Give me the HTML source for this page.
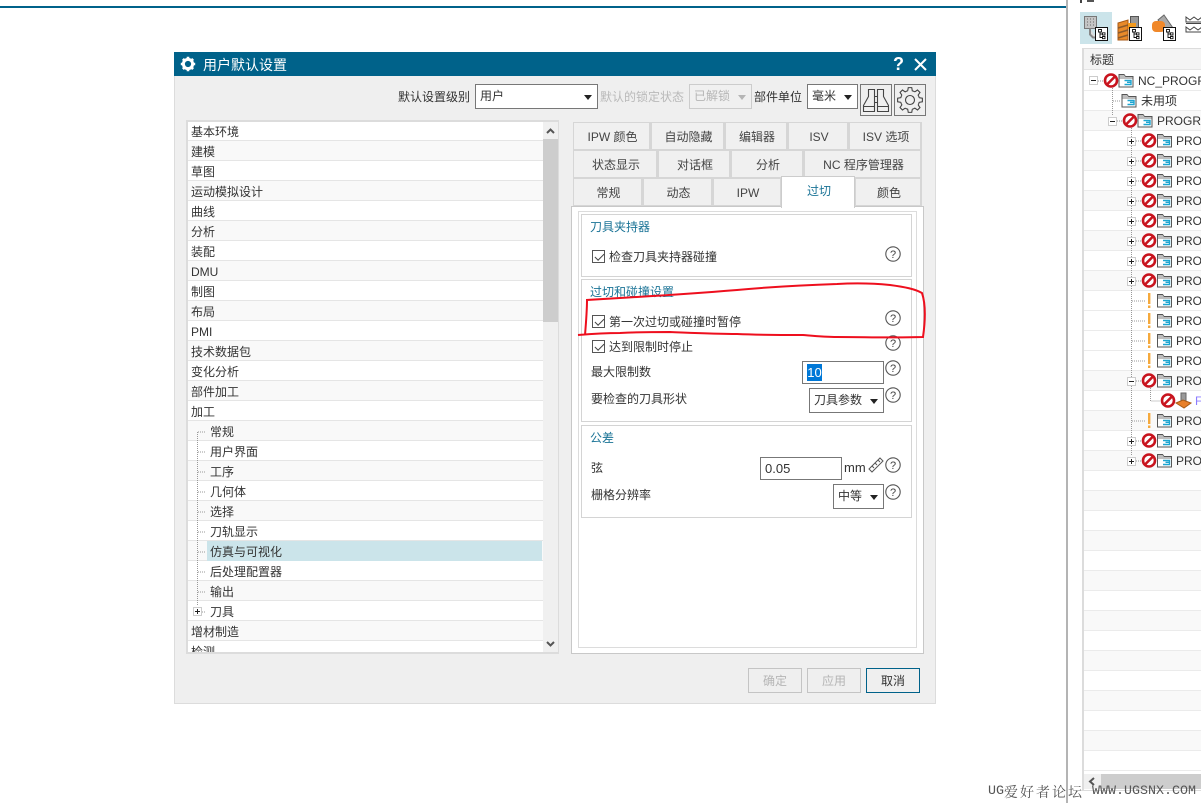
<!DOCTYPE html>
<html lang="zh"><head><meta charset="utf-8"><title>用户默认设置</title>
<style>
html,body{margin:0;padding:0;background:#fff}
body{width:1201px;height:803px;position:relative;overflow:hidden;font:12px/20px "Liberation Sans","Noto Sans CJK SC",sans-serif;color:#333}
div,span{position:absolute;box-sizing:border-box;white-space:nowrap}
.row{left:188px;width:355px;height:20px;border-bottom:1px solid #e5e5e5;line-height:22px;padding-left:3px}
.g{background:#f9f9f9}
.c{padding-left:22px}
.tab{height:28px;background:#f0f0f0;border:1px solid #d6d6d6;border-width:1px 2px 1px 1px;text-align:center;line-height:28px;color:#444;padding-left:2px}
.grp{left:581px;width:331px;border:1px solid #d4d4d4;background:#fff}
.cap{color:#1a7396;left:590px}
.t{color:#333}
.sel,.inp{background:#fff;border:1px solid #777;line-height:22px;padding-left:4px}
.sel:after{content:"";position:absolute;right:5px;top:10px;border:4px solid transparent;border-top:5px solid #222;border-bottom:0}
.dis:after{border-top-color:#b5b5b5}
.btn{top:668px;width:54px;height:25px;border:1px solid #c4c4c4;text-align:center;line-height:24px;color:#b5b5b5}
.cb{left:592px;width:13px;height:13px;border:1px solid #555;background:#fff}
.cb:after{content:"";position:absolute;left:2px;top:1px;width:8px;height:4px;border:solid #444;border-width:0 0 1.5px 1.5px;transform:rotate(-45deg) translate(-1px,1px)}
</style></head><body>

<div style="left:0;top:6px;width:1066px;height:2px;background:#00628a"></div>
<div style="left:1066px;top:0;width:2px;height:803px;background:#b4b4b4"></div>

<!-- dialog -->
<div style="left:174px;top:52px;width:762px;height:652px;background:#efefef;border:1px solid #dcdcdc"></div>
<div style="left:174px;top:52px;width:762px;height:24px;background:#00628a"></div>
<svg style="position:absolute;left:180px;top:56px" width="16" height="16" viewBox="0 0 16 16"><circle cx="8" cy="8" r="4.6" fill="none" stroke="#fff" stroke-width="3"/><g stroke="#fff" stroke-width="2.6"><path d="M8 .8v3M8 12.2v3M.8 8h3M12.2 8h3M2.9 2.9l2 2M11.1 11.1l2 2M13.1 2.9l-2 2M4.9 11.1l-2 2"/></g></svg>
<div style="left:203px;top:55px;color:#fff;font-size:14px;line-height:21px">用户默认设置</div>
<div style="left:893px;top:54px;color:#fff;font:bold 18px/21px 'Liberation Sans',sans-serif">?</div>
<svg style="position:absolute;left:914px;top:58px" width="13" height="13"><path d="M1 1l11 11M12 1L1 12" stroke="#fff" stroke-width="2"/></svg>

<div class="t" style="left:398px;top:87px">默认设置级别</div>
<div class="sel" style="left:475px;top:84px;width:123px;height:25px">用户</div>
<div style="left:600px;top:87px;color:#b9b9b9">默认的锁定状态</div>
<div class="sel dis" style="left:689px;top:84px;width:63px;height:25px;border-color:#ccc;background:#f0f0f0;color:#b5b5b5;padding-left:4px">已解锁</div>
<div class="t" style="left:754px;top:87px">部件单位</div>
<div class="sel" style="left:807px;top:84px;width:51px;height:25px">毫米</div>
<div style="left:860px;top:84px;width:32px;height:32px;border:1px solid #777"></div>
<div style="left:894px;top:84px;width:32px;height:32px;border:1px solid #777"></div>
<svg style="position:absolute;left:860px;top:84px" width="32" height="32" fill="none" stroke="#444" stroke-width="1.100"><path d="M8.500 5.500h6v22h-11v-6l5-9zM23.500 5.500h-6v22h11v-6l-5-9zM14.500 12.500h3M14.500 18.500h3M3.500 22.500h11M17.500 22.500h11"/></svg>
<svg style="position:absolute;left:894px;top:84px" width="32" height="32" fill="none" stroke="#444" stroke-width="1.100"><defs><path id="gt" d="M13.700 6.780L14.260 3.620H17.740L18.300 6.780A9.500 9.500 0 0 1 20.890 7.860"/></defs><circle cx="16" cy="16" r="4.500"/><use href="#gt"/><use href="#gt" transform="rotate(45 16 16)"/><use href="#gt" transform="rotate(90 16 16)"/><use href="#gt" transform="rotate(135 16 16)"/><use href="#gt" transform="rotate(180 16 16)"/><use href="#gt" transform="rotate(225 16 16)"/><use href="#gt" transform="rotate(270 16 16)"/><use href="#gt" transform="rotate(315 16 16)"/></svg>

<!-- left list -->
<div style="left:186px;top:120px;width:373px;height:534px;background:#fff;border:2px solid #dcdcdc;border-right-width:1px"></div>
<div class="row" style="top:121px">基本环境</div>
<div class="row g" style="top:141px">建模</div>
<div class="row" style="top:161px">草图</div>
<div class="row g" style="top:181px">运动模拟设计</div>
<div class="row" style="top:201px">曲线</div>
<div class="row g" style="top:221px">分析</div>
<div class="row" style="top:241px">装配</div>
<div class="row g" style="top:261px">DMU</div>
<div class="row" style="top:281px">制图</div>
<div class="row g" style="top:301px">布局</div>
<div class="row" style="top:321px">PMI</div>
<div class="row g" style="top:341px">技术数据包</div>
<div class="row" style="top:361px">变化分析</div>
<div class="row g" style="top:381px">部件加工</div>
<div class="row" style="top:401px">加工</div>
<div class="row g c" style="top:421px">常规</div>
<div class="row c" style="top:441px">用户界面</div>
<div class="row g c" style="top:461px">工序</div>
<div class="row c" style="top:481px">几何体</div>
<div class="row g c" style="top:501px">选择</div>
<div class="row c" style="top:521px">刀轨显示</div>
<div class="row g" style="top:541px"></div>
<div style="left:207px;top:541px;width:335px;height:20px;background:#cbe4ea"></div>
<div style="left:210px;top:541px;line-height:22px">仿真与可视化</div>
<div class="row c" style="top:561px">后处理配置器</div>
<div class="row g c" style="top:581px">输出</div>
<div class="row c" style="top:601px">刀具</div>
<div class="row g" style="top:621px">增材制造</div>
<div style="left:188px;top:641px;width:355px;height:11px;overflow:hidden;line-height:22px;padding-left:3px">检测</div>
<svg style="position:absolute;left:190px;top:425px" width="20" height="192"><path d="M7.500 7V181M8 7h8M8 27h8M8 47h8M8 67h8M8 87h8M8 107h8M8 127h8M8 147h8M8 167h8M12 187h4" stroke="#999" stroke-dasharray="1 1" fill="none"/><rect x="3.500" y="182.500" width="8" height="8" fill="#fff" stroke="#ccc"/><path d="M5 186.500h5M7.500 184v5" stroke="#222"/></svg>
<div style="left:543px;top:122px;width:15px;height:530px;background:#f0f0f0"></div>
<div style="left:543px;top:139px;width:15px;height:183px;background:#cdcdcd"></div>
<svg style="position:absolute;left:543px;top:122px" width="15" height="17"><path d="M4 11l3.500-3.500L11 11" fill="none" stroke="#555" stroke-width="2"/></svg>
<svg style="position:absolute;left:543px;top:636px" width="15" height="16"><path d="M4 6l3.500 3.500L11 6" fill="none" stroke="#555" stroke-width="2"/></svg>

<!-- tabs -->
<div class="tab" style="left:573px;top:122px;width:78px">IPW 颜色</div>
<div class="tab" style="left:651px;top:122px;width:74px">自动隐藏</div>
<div class="tab" style="left:725px;top:122px;width:63px">编辑器</div>
<div class="tab" style="left:788px;top:122px;width:61px">ISV</div>
<div class="tab" style="left:849px;top:122px;width:73px">ISV 选项</div>
<div class="tab" style="left:573px;top:150px;width:85px">状态显示</div>
<div class="tab" style="left:658px;top:150px;width:73px">对话框</div>
<div class="tab" style="left:731px;top:150px;width:73px">分析</div>
<div class="tab" style="left:804px;top:150px;width:118px">NC 程序管理器</div>
<div class="tab" style="left:573px;top:178px;width:70px">常规</div>
<div class="tab" style="left:643px;top:178px;width:70px">动态</div>
<div class="tab" style="left:713px;top:178px;width:69px">IPW</div>
<div class="tab" style="left:855px;top:178px;width:67px">颜色</div>

<!-- panel -->
<div style="left:571px;top:206px;width:353px;height:448px;background:#fff;border:1px solid #c8c8c8"></div>
<div style="left:578px;top:211px;width:339px;height:437px;border:1px solid #dcdcdc"></div>
<div style="left:781px;top:176px;width:74px;height:32px;background:#fff;border:1px solid #ccc;border-bottom:0;text-align:center;line-height:29px;color:#1a7396;padding-left:2px">过切</div>

<div class="grp" style="top:214px;height:63px"></div>
<div class="cap" style="top:217px">刀具夹持器</div>
<div class="cb" style="top:250px"></div>
<div class="t" style="left:609px;top:247px">检查刀具夹持器碰撞</div>

<div class="grp" style="top:279px;height:143px"></div>
<div class="cap" style="top:282px">过切和碰撞设置</div>
<div class="cb" style="top:315px"></div>
<div class="t" style="left:609px;top:312px">第一次过切或碰撞时暂停</div>
<div class="cb" style="top:340px"></div>
<div class="t" style="left:609px;top:337px">达到限制时停止</div>
<div class="t" style="left:591px;top:362px">最大限制数</div>
<div class="inp" style="left:802px;top:361px;width:82px;height:23px"></div>
<div style="left:807px;top:364px;width:15px;height:17px;background:#0078d7;color:#fff;line-height:17px;font-size:13px;text-align:center">10</div>
<div class="t" style="left:591px;top:389px">要检查的刀具形状</div>
<div class="sel" style="left:809px;top:388px;width:75px;height:25px">刀具参数</div>

<div class="grp" style="top:425px;height:93px"></div>
<div class="cap" style="top:428px">公差</div>
<div class="t" style="left:591px;top:458px">弦</div>
<div class="inp" style="left:760px;top:457px;width:82px;height:23px;font-size:13px">0.05</div>
<div class="t" style="left:844px;top:458px;font-size:13px">mm</div>
<svg style="position:absolute;left:867px;top:456px" width="18" height="18" fill="#fff" stroke="#555"><path d="M2 13L13 2l3 3L5 16zM5 10l2 2M8 7l2 2M11 4l2 2"/></svg>
<div class="t" style="left:591px;top:485px">栅格分辨率</div>
<div class="sel" style="left:833px;top:484px;width:51px;height:25px">中等</div>

<svg style="position:absolute;left:880px;top:240px" width="30" height="265" fill="none" stroke="#555" stroke-width="1.100">
<circle cx="13" cy="14" r="7.200"/><circle cx="13" cy="78" r="7.200"/><circle cx="13" cy="103" r="7.200"/><circle cx="13" cy="128" r="7.200"/><circle cx="13" cy="155" r="7.200"/><circle cx="13" cy="225" r="7.200"/><circle cx="13" cy="252" r="7.200"/>
<g font-family="Liberation Sans" font-size="11" fill="#444" stroke="none" text-anchor="middle"><text x="13" y="18">?</text><text x="13" y="82">?</text><text x="13" y="107">?</text><text x="13" y="132">?</text><text x="13" y="159">?</text><text x="13" y="229">?</text><text x="13" y="256">?</text></g>
</svg>

<!-- red annotation -->
<svg style="position:absolute;left:570px;top:275px" width="365" height="70" fill="none" stroke="#ee0f1e" stroke-width="2"><path d="M8 60C20 59 35 58 50 58C70 57 85 57 100 57C125 58 145 59 167 59C190 60 210 60 233 60C245 61 255 62 267 62C295 62 325 63 353 62C355 48 356 30 352 18C345 14 335 12 320 10C300 8 285 8 267 9C235 10 200 12 167 15C130 18 100 20 67 22C50 23 32 24 17 25C17 36 16 48 15 60"/></svg>

<div class="btn" style="left:748px">确定</div>
<div class="btn" style="left:807px">应用</div>
<div class="btn" style="left:866px;border-color:#00628a;color:#333">取消</div>

<!-- right tree -->
<div style="left:1082px;top:48px;width:119px;height:743px;background:#fff;border:solid #dcdcdc;border-width:1px 0 1px 2px"></div>
<div style="left:1084px;top:49px;width:117px;height:21px;background:#f4f4f4;border-bottom:1px solid #e4e4e4;padding-left:6px;line-height:22px;font-size:12px">标题</div>
<div style="left:1080px;top:0;width:2px;height:3px;background:#444"></div>
<div style="left:1087px;top:0;width:7px;height:2px;background:#555"></div>

<svg style="position:absolute;left:0;top:0" width="1201" height="803">
<defs>
<g id="no"><circle cx="8" cy="7.500" r="6" fill="#fff" stroke="#c8141e" stroke-width="2.600"/><path d="M4 11.500l8-8" stroke="#c8141e" stroke-width="2.600"/></g>
<g id="fo"><path d="M.5 1.500h5l1.500 2h7.500v10.500H.5z" fill="#fff" stroke="#555"/><path d="M1 2h4.500l1.500 2h7v2H1z" fill="#bdbdbd"/><path d="M6 7.500h6.500v1.800h-4M8.500 9.300h4v2.200H6" stroke="#1ea5d0" stroke-width="1.400" fill="none"/></g>
<g id="ex"><rect x="0" y="0" width="2.400" height="11" fill="#f5a93c"/><rect x="0" y="12.500" width="2.400" height="2.500" fill="#f5a93c"/></g>
<g id="pl"><rect x=".5" y=".5" width="8" height="8" fill="#fff" stroke="#ccc"/><path d="M2 4.500h5M4.500 2v5" stroke="#222"/></g>
<g id="mi"><rect x=".5" y=".5" width="8" height="8" fill="#fff" stroke="#ccc"/><path d="M2 4.500h5" stroke="#222"/></g>
<g id="tc"><rect x=".5" y=".5" width="12" height="13" fill="#fff" stroke="#111"/><path d="M3.500 2.500h3v2.500h-3zM7.500 5.800h2.500v2.200h-2.500zM7.500 9.500h2.500v2.200h-2.500zM5 5v5.500h2.500M5 7h2.500" fill="none" stroke="#111" stroke-width=".9"/></g>
</defs>
<rect x="1080" y="12" width="32" height="32" fill="#cbe4ea"/>
<rect x="1084.500" y="16.500" width="12" height="12" fill="#c4c4c4" stroke="#777"/>
<path d="M1087 19h1M1090 19h1M1093 19h1M1087 22h1M1090 22h1M1093 22h1M1087 25h1M1090 25h1M1093 25h1" stroke="#666"/>
<path d="M1090 28.500v6l3 3h3" fill="#ddd" stroke="#888" stroke-width="2"/>
<use href="#tc" x="1095" y="27"/>
<path d="M1118 23l10-3v20h-10z" fill="#e88a2a" stroke="#a85a15"/><path d="M1118 28l10-3M1118 33l10-3M1118 38l10-3" stroke="#8c5a2a" stroke-width="1.600"/>
<rect x="1130.500" y="16.500" width="8" height="14" fill="#999" stroke="#555"/><rect x="1128" y="23" width="8" height="6" fill="#f39a1e"/>
<use href="#tc" x="1129" y="27"/>
<path d="M1164 15l9 13-6 5-9-13z" fill="#aaa" stroke="#666"/><rect x="1152" y="21" width="13" height="11" rx="4" fill="#f0882a"/>
<use href="#tc" x="1163" y="27"/>
<path d="M1186 17l4 3 4-3 4 3 4-3v5h-16zM1186 23.500h16M1186 27l4 3 4-3 4 3 4-3v5h-16z" fill="#fff" stroke="#444"/>

<!-- rows -->
<g fill="#f9f9f9"><rect x="1084" y="110" width="117" height="20"/><rect x="1084" y="150" width="117" height="20"/><rect x="1084" y="190" width="117" height="20"/><rect x="1084" y="230" width="117" height="20"/><rect x="1084" y="270" width="117" height="20"/><rect x="1084" y="370" width="117" height="20"/><rect x="1084" y="410" width="117" height="20"/><rect x="1084" y="450" width="117" height="20"/><rect x="1084" y="490" width="117" height="20"/><rect x="1084" y="530" width="117" height="20"/><rect x="1084" y="570" width="117" height="20"/><rect x="1084" y="610" width="117" height="20"/><rect x="1084" y="650" width="117" height="20"/><rect x="1084" y="690" width="117" height="20"/><rect x="1084" y="730" width="117" height="20"/></g>
<path stroke="#ebebeb" d="M1084 90.500h117M1084 110.500h117M1084 130.500h117M1084 150.500h117M1084 170.500h117M1084 190.500h117M1084 210.500h117M1084 230.500h117M1084 250.500h117M1084 270.500h117M1084 290.500h117M1084 310.500h117M1084 330.500h117M1084 350.500h117M1084 370.500h117M1084 390.500h117M1084 410.500h117M1084 430.500h117M1084 450.500h117M1084 470.500h117M1084 490.500h117M1084 510.500h117M1084 530.500h117M1084 550.500h117M1084 570.500h117M1084 590.500h117M1084 610.500h117M1084 630.500h117M1084 650.500h117M1084 670.500h117M1084 690.500h117M1084 710.500h117M1084 730.500h117M1084 750.500h117M1084 770.500h117"/>
<path stroke="#999" stroke-dasharray="1 1" fill="none" d="M1112.500 86V116M1113 101h8M1098 81h6M1117 121h6M1131.500 126V456M1136 141h6M1136 161h6M1136 181h6M1136 201h6M1136 221h6M1136 241h6M1136 261h6M1136 281h6M1132 301h14M1132 321h14M1132 341h14M1132 361h14M1136 381h6M1150.500 388V401H1160M1132 421h14M1136 441h6M1136 461h6"/>

<use href="#mi" x="1089" y="76"/><use href="#no" x="1103" y="73"/><use href="#fo" x="1118.500" y="73"/>
<use href="#fo" x="1121.500" y="93"/>
<use href="#mi" x="1108" y="117"/><use href="#no" x="1122" y="113"/><use href="#fo" x="1137.500" y="113"/>
<use href="#pl" x="1127" y="137"/><use href="#no" x="1141" y="133"/><use href="#fo" x="1157" y="133"/>
<use href="#pl" x="1127" y="157"/><use href="#no" x="1141" y="153"/><use href="#fo" x="1157" y="153"/>
<use href="#pl" x="1127" y="177"/><use href="#no" x="1141" y="173"/><use href="#fo" x="1157" y="173"/>
<use href="#pl" x="1127" y="197"/><use href="#no" x="1141" y="193"/><use href="#fo" x="1157" y="193"/>
<use href="#pl" x="1127" y="217"/><use href="#no" x="1141" y="213"/><use href="#fo" x="1157" y="213"/>
<use href="#pl" x="1127" y="237"/><use href="#no" x="1141" y="233"/><use href="#fo" x="1157" y="233"/>
<use href="#pl" x="1127" y="257"/><use href="#no" x="1141" y="253"/><use href="#fo" x="1157" y="253"/>
<use href="#pl" x="1127" y="277"/><use href="#no" x="1141" y="273"/><use href="#fo" x="1157" y="273"/>
<use href="#ex" x="1148" y="293"/><use href="#fo" x="1157" y="293"/>
<use href="#ex" x="1148" y="313"/><use href="#fo" x="1157" y="313"/>
<use href="#ex" x="1148" y="333"/><use href="#fo" x="1157" y="333"/>
<use href="#ex" x="1148" y="353"/><use href="#fo" x="1157" y="353"/>
<use href="#mi" x="1127" y="377"/><use href="#no" x="1141" y="373"/><use href="#fo" x="1157" y="373"/>
<use href="#no" x="1160" y="393"/>
<path d="M1181 393h5v9h-5z" fill="#999" stroke="#666"/><path d="M1176 403l7-3 8 3-7 5z" fill="#e8802a" stroke="#a85a15"/>
<use href="#ex" x="1148" y="413"/><use href="#fo" x="1157" y="413"/>
<use href="#pl" x="1127" y="437"/><use href="#no" x="1141" y="433"/><use href="#fo" x="1157" y="433"/>
<use href="#pl" x="1127" y="457"/><use href="#no" x="1141" y="453"/><use href="#fo" x="1157" y="453"/>

<g font-family="Liberation Sans,Noto Sans CJK SC,sans-serif" font-size="12" fill="#333">
<text x="1138" y="85">NC_PROGRAM</text><text x="1141" y="105">未用项</text><text x="1157" y="125">PROGRAM</text>
<text x="1176" y="145">PROGRAM</text><text x="1176" y="165">PROGRAM</text><text x="1176" y="185">PROGRAM</text><text x="1176" y="205">PROGRAM</text><text x="1176" y="225">PROGRAM</text><text x="1176" y="245">PROGRAM</text><text x="1176" y="265">PROGRAM</text><text x="1176" y="285">PROGRAM</text><text x="1176" y="305">PROGRAM</text><text x="1176" y="325">PROGRAM</text><text x="1176" y="345">PROGRAM</text><text x="1176" y="365">PROGRAM</text><text x="1176" y="385">PROGRAM</text>
<text x="1195" y="405" fill="#8c7cff">F</text>
<text x="1176" y="425">PROGRAM</text><text x="1176" y="445">PROGRAM</text><text x="1176" y="465">PROGRAM</text>
</g>

<rect x="1084" y="774" width="117" height="15" fill="#f0f0f0"/><rect x="1101" y="774" width="100" height="15" fill="#cdcdcd"/>
<path d="M1094 778l-4 3.500 4 3.500" fill="none" stroke="#555" stroke-width="2"/>
</svg>

<div style="left:988px;top:783px;font:13.33px/18px 'Liberation Mono',monospace;color:#555">UG</div>
<div style="left:1004px;top:783px;font:14px/18px 'Noto Serif CJK SC',serif;color:#555;letter-spacing:2px">爱好者论坛</div>
<div style="left:1092px;top:783px;font:13.33px/18px 'Liberation Mono',monospace;color:#555">WWW.UGSNX.COM</div>
</body></html>
